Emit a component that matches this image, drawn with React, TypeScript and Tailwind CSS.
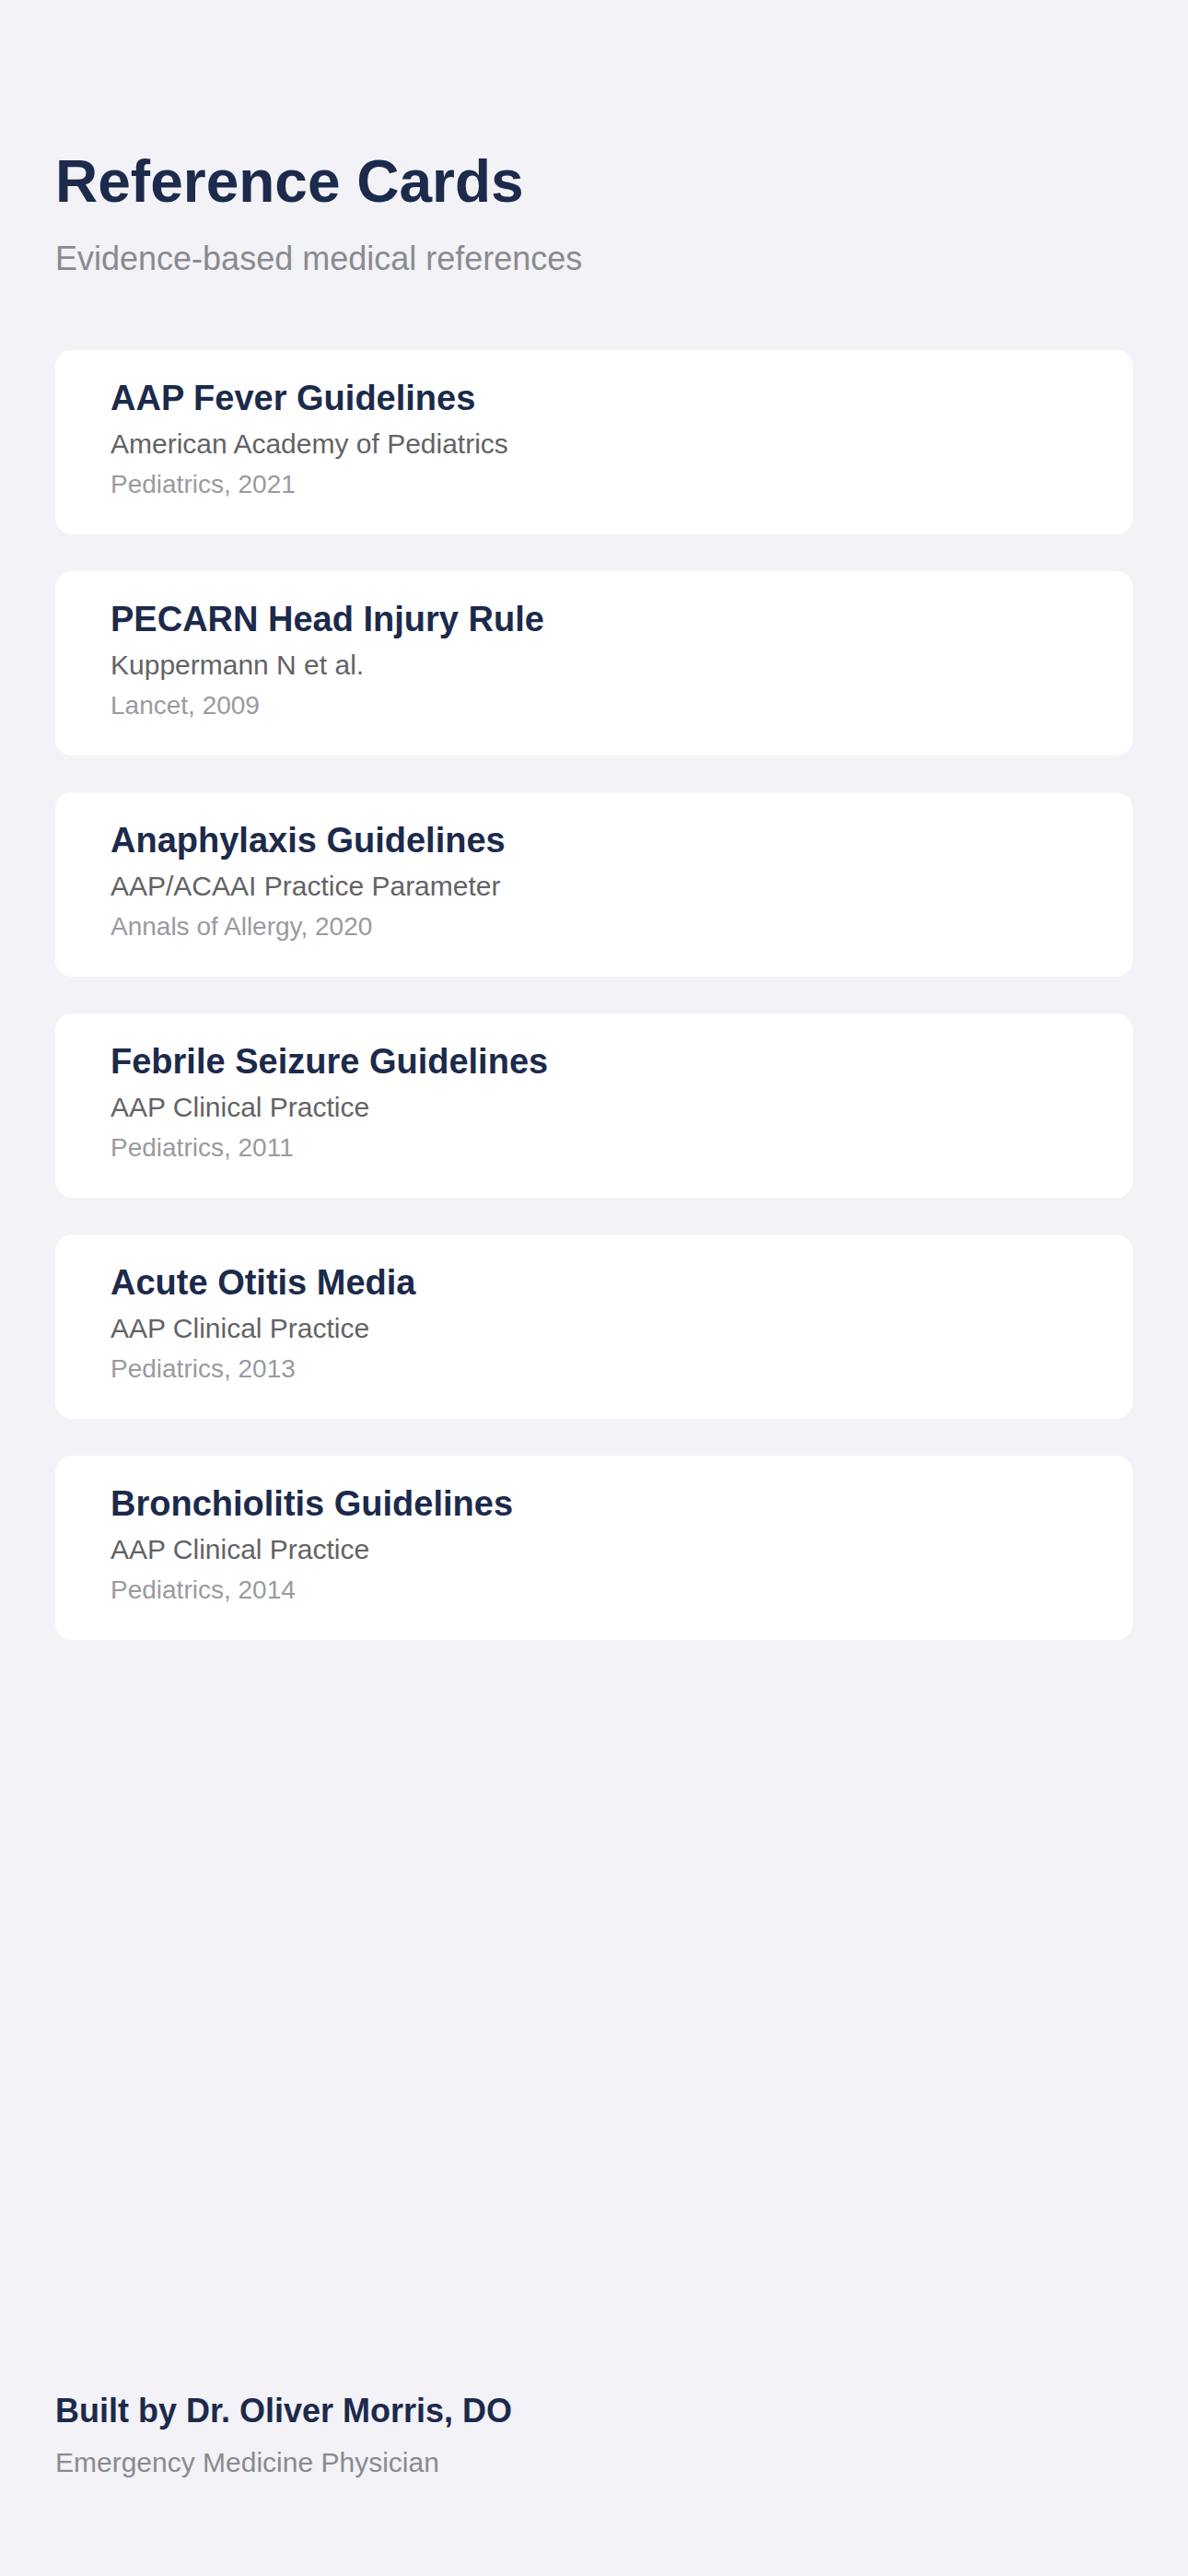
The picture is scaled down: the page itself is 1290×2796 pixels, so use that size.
import React from "react";

type Reference = {
  title: string;
  source: string;
  journal: string;
};

const references: Reference[] = [
  { title: "AAP Fever Guidelines", source: "American Academy of Pediatrics", journal: "Pediatrics, 2021" },
  { title: "PECARN Head Injury Rule", source: "Kuppermann N et al.", journal: "Lancet, 2009" },
  { title: "Anaphylaxis Guidelines", source: "AAP/ACAAI Practice Parameter", journal: "Annals of Allergy, 2020" },
  { title: "Febrile Seizure Guidelines", source: "AAP Clinical Practice", journal: "Pediatrics, 2011" },
  { title: "Acute Otitis Media", source: "AAP Clinical Practice", journal: "Pediatrics, 2013" },
  { title: "Bronchiolitis Guidelines", source: "AAP Clinical Practice", journal: "Pediatrics, 2014" },
];

function ReferenceCard({ item }: { item: Reference }) {
  return (
    <div className="bg-white rounded-[18px] pl-[60px] pr-[30px] pt-[30px] pb-[37px]">
      <h2 className="text-[38px] leading-[44px] font-bold text-[#1c2a4b]">{item.title}</h2>
      <p className="mt-[10px] text-[30px] leading-[36px] text-[#636366]">{item.source}</p>
      <p className="mt-[9px] text-[28px] leading-[34px] text-[#9a9aa0]">{item.journal}</p>
    </div>
  );
}

export default function App() {
  return (
    <div
      className="min-h-screen bg-[#f2f2f7] flex flex-col px-[60px]"
      style={{ fontFamily: '"Liberation Sans", Arial, sans-serif' }}
    >
      <header className="pt-[160px]">
        <h1 className="text-[64px] leading-[74px] font-bold text-[#1c2a4b]">Reference Cards</h1>
        <p className="mt-[26px] text-[36px] leading-[42px] text-[#8a8a8f]">Evidence-based medical references</p>
      </header>

      <main className="mt-[78px] flex flex-col gap-[40px]">
        {references.map((r) => (
          <ReferenceCard key={r.title} item={r} />
        ))}
      </main>

      <footer className="mt-auto pb-[105px]">
        <p className="text-[36px] leading-[42px] font-bold text-[#1c2a4b]">Built by Dr. Oliver Morris, DO</p>
        <p className="mt-[17px] text-[30px] leading-[36px] text-[#8a8a8f]">Emergency Medicine Physician</p>
      </footer>
    </div>
  );
}
